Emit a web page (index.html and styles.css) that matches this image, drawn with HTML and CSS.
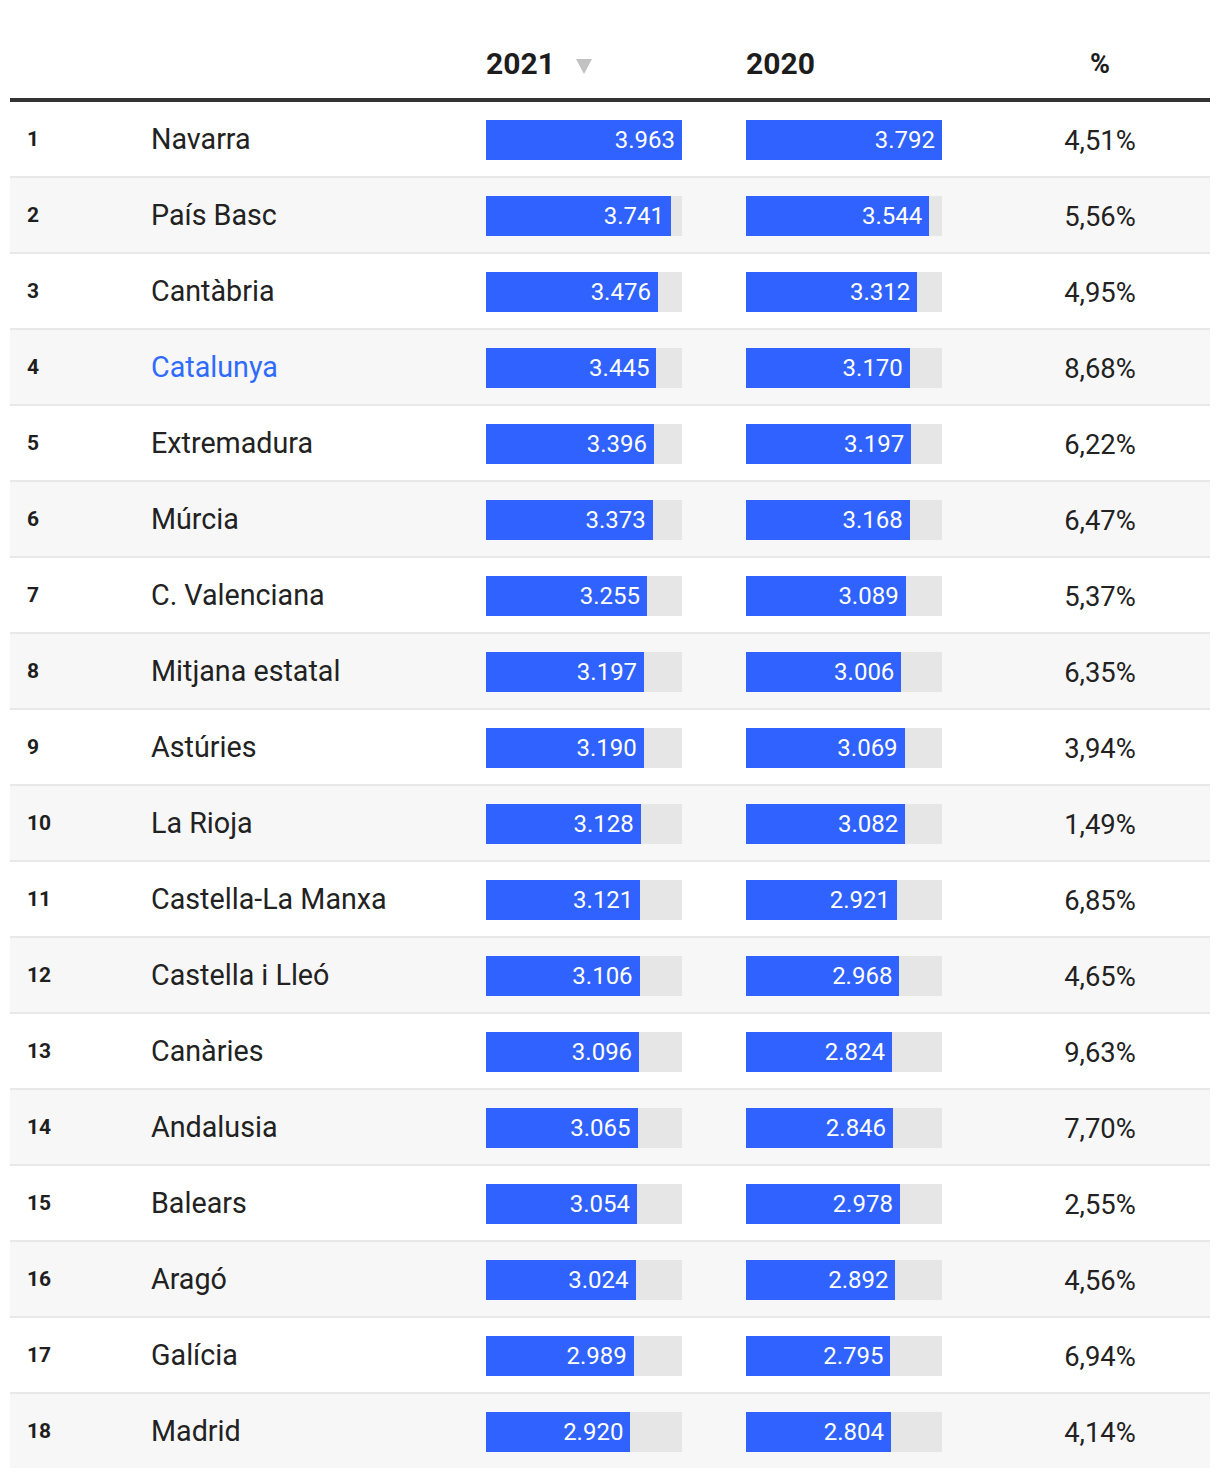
FILE: index.html
```html
<!DOCTYPE html>
<html lang="ca">
<head>
<meta charset="utf-8">
<link rel="stylesheet" href="styles.css">
</head>
<body>
<div class="table">
  <div class="head">
    <div class="hcell"></div>
    <div class="hcell"></div>
    <div class="hcell year">2021 <span class="arrow"></span></div>
    <div class="hcell year">2020</div>
    <div class="hcell pct">%</div>
  </div>

  <div class="row"><div class="rank">1</div><div class="name">Navarra</div><div class="barcell"><div class="track"><div class="fill" style="width:100%">3.963</div></div></div><div class="barcell"><div class="track"><div class="fill" style="width:100%">3.792</div></div></div><div class="pct">4,51%</div></div>
  <div class="row"><div class="rank">2</div><div class="name">País Basc</div><div class="barcell"><div class="track"><div class="fill" style="width:94.40%">3.741</div></div></div><div class="barcell"><div class="track"><div class="fill" style="width:93.46%">3.544</div></div></div><div class="pct">5,56%</div></div>
  <div class="row"><div class="rank">3</div><div class="name">Cantàbria</div><div class="barcell"><div class="track"><div class="fill" style="width:87.71%">3.476</div></div></div><div class="barcell"><div class="track"><div class="fill" style="width:87.34%">3.312</div></div></div><div class="pct">4,95%</div></div>
  <div class="row"><div class="rank">4</div><div class="name hl">Catalunya</div><div class="barcell"><div class="track"><div class="fill" style="width:86.93%">3.445</div></div></div><div class="barcell"><div class="track"><div class="fill" style="width:83.60%">3.170</div></div></div><div class="pct">8,68%</div></div>
  <div class="row"><div class="rank">5</div><div class="name">Extremadura</div><div class="barcell"><div class="track"><div class="fill" style="width:85.69%">3.396</div></div></div><div class="barcell"><div class="track"><div class="fill" style="width:84.31%">3.197</div></div></div><div class="pct">6,22%</div></div>
  <div class="row"><div class="rank">6</div><div class="name">Múrcia</div><div class="barcell"><div class="track"><div class="fill" style="width:85.11%">3.373</div></div></div><div class="barcell"><div class="track"><div class="fill" style="width:83.54%">3.168</div></div></div><div class="pct">6,47%</div></div>
  <div class="row"><div class="rank">7</div><div class="name">C. Valenciana</div><div class="barcell"><div class="track"><div class="fill" style="width:82.14%">3.255</div></div></div><div class="barcell"><div class="track"><div class="fill" style="width:81.46%">3.089</div></div></div><div class="pct">5,37%</div></div>
  <div class="row"><div class="rank">8</div><div class="name">Mitjana estatal</div><div class="barcell"><div class="track"><div class="fill" style="width:80.67%">3.197</div></div></div><div class="barcell"><div class="track"><div class="fill" style="width:79.27%">3.006</div></div></div><div class="pct">6,35%</div></div>
  <div class="row"><div class="rank">9</div><div class="name">Astúries</div><div class="barcell"><div class="track"><div class="fill" style="width:80.49%">3.190</div></div></div><div class="barcell"><div class="track"><div class="fill" style="width:80.93%">3.069</div></div></div><div class="pct">3,94%</div></div>
  <div class="row"><div class="rank">10</div><div class="name">La Rioja</div><div class="barcell"><div class="track"><div class="fill" style="width:78.93%">3.128</div></div></div><div class="barcell"><div class="track"><div class="fill" style="width:81.28%">3.082</div></div></div><div class="pct">1,49%</div></div>
  <div class="row"><div class="rank">11</div><div class="name">Castella-La Manxa</div><div class="barcell"><div class="track"><div class="fill" style="width:78.75%">3.121</div></div></div><div class="barcell"><div class="track"><div class="fill" style="width:77.03%">2.921</div></div></div><div class="pct">6,85%</div></div>
  <div class="row"><div class="rank">12</div><div class="name">Castella i Lleó</div><div class="barcell"><div class="track"><div class="fill" style="width:78.38%">3.106</div></div></div><div class="barcell"><div class="track"><div class="fill" style="width:78.27%">2.968</div></div></div><div class="pct">4,65%</div></div>
  <div class="row"><div class="rank">13</div><div class="name">Canàries</div><div class="barcell"><div class="track"><div class="fill" style="width:78.12%">3.096</div></div></div><div class="barcell"><div class="track"><div class="fill" style="width:74.47%">2.824</div></div></div><div class="pct">9,63%</div></div>
  <div class="row"><div class="rank">14</div><div class="name">Andalusia</div><div class="barcell"><div class="track"><div class="fill" style="width:77.34%">3.065</div></div></div><div class="barcell"><div class="track"><div class="fill" style="width:75.05%">2.846</div></div></div><div class="pct">7,70%</div></div>
  <div class="row"><div class="rank">15</div><div class="name">Balears</div><div class="barcell"><div class="track"><div class="fill" style="width:77.06%">3.054</div></div></div><div class="barcell"><div class="track"><div class="fill" style="width:78.53%">2.978</div></div></div><div class="pct">2,55%</div></div>
  <div class="row"><div class="rank">16</div><div class="name">Aragó</div><div class="barcell"><div class="track"><div class="fill" style="width:76.31%">3.024</div></div></div><div class="barcell"><div class="track"><div class="fill" style="width:76.27%">2.892</div></div></div><div class="pct">4,56%</div></div>
  <div class="row"><div class="rank">17</div><div class="name">Galícia</div><div class="barcell"><div class="track"><div class="fill" style="width:75.42%">2.989</div></div></div><div class="barcell"><div class="track"><div class="fill" style="width:73.71%">2.795</div></div></div><div class="pct">6,94%</div></div>
  <div class="row"><div class="rank">18</div><div class="name">Madrid</div><div class="barcell"><div class="track"><div class="fill" style="width:73.68%">2.920</div></div></div><div class="barcell"><div class="track"><div class="fill" style="width:73.95%">2.804</div></div></div><div class="pct">4,14%</div></div>
</div>
</body>
</html>
```

FILE: styles.css
```css
html, body {
  margin: 0;
  padding: 0;
  background: #fff;
}
body {
  font-family: Roboto, "Liberation Sans", Arial, sans-serif;
  color: #222;
}
.table {
  margin: 0 10px;
  width: 1200px;
}
.head,
.row {
  display: grid;
  grid-template-columns: 141px 335px 260px 244px 220px;
}
.head {
  height: 98px;
  border-bottom: 4px solid #333;
  align-items: end;
}
.hcell {
  font-weight: 700;
  font-size: 30px;
  line-height: 30px;
  padding-bottom: 19px;
  color: #1d1d1d;
  display: flex;
  align-items: center;
}
.hcell.pct {
  justify-content: center;
  font-size: 27px;
}
.arrow {
  display: inline-block;
  width: 0;
  height: 0;
  margin-left: 21px;
  margin-top: 4px;
  border-left: 8px solid transparent;
  border-right: 8px solid transparent;
  border-top: 15px solid #c2c2c2;
}
.row {
  height: 74px;
  align-items: center;
  border-bottom: 2px solid #e8e8e8;
}
.row:nth-child(odd) {
  background: #f7f7f7;
}
.row:last-child {
  border-bottom: 0;
}
.rank {
  padding-left: 17px;
  font-weight: 700;
  font-size: 21px;
  color: #1f1f1f;
}
.name {
  font-size: 28.7px;
  color: #222;
}
.name.hl {
  color: #2f6bff;
}
.barcell {
  padding-top: 2px;
}
.track {
  width: 196px;
  height: 40px;
  background: #e6e6e6;
}
.fill {
  height: 40px;
  background: #2f62ff;
  color: #fff;
  font-size: 24px;
  line-height: 40px;
  text-align: right;
  padding-right: 7px;
  box-sizing: border-box;
  white-space: nowrap;
}
.row .pct {
  text-align: center;
  font-size: 27.4px;
  padding-top: 4px;
  color: #222;
}
```
